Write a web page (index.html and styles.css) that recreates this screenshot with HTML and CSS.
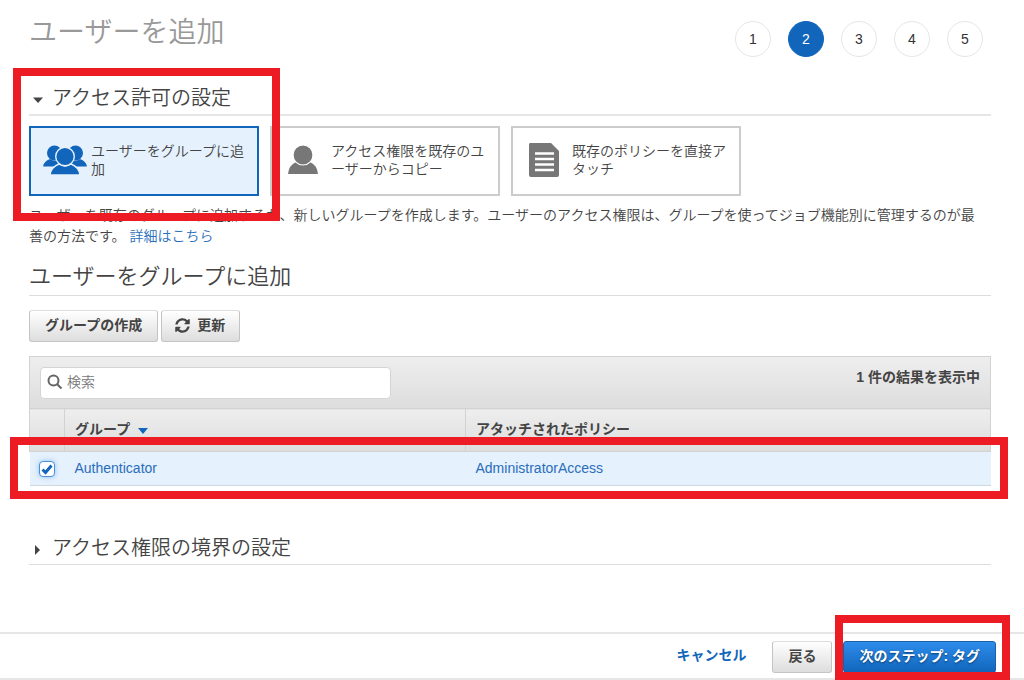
FILE: index.html
```html
<!DOCTYPE html>
<html lang="ja">
<head>
<meta charset="utf-8">
<title>ユーザーを追加</title>
<link rel="stylesheet" href="styles.css">
</head>
<body>
<main class="page">
  <header class="page-header">
    <h1 class="page-title">ユーザーを追加</h1>
    <ol class="steps">
      <li class="step">1</li>
      <li class="step step-current" aria-current="step">2</li>
      <li class="step">3</li>
      <li class="step">4</li>
      <li class="step">5</li>
    </ol>
  </header>

  <section class="permissions">
    <h2 class="section-title">
      <button class="toggle" type="button" aria-expanded="true"><svg class="caret" viewBox="0 0 10 10" aria-hidden="true"><path d="M0 2.500h10L5 8z"/></svg>アクセス許可の設定</button>
    </h2>
    <div class="options">
      <button class="option option-selected" type="button" aria-pressed="true">
        <svg class="icon-group" viewBox="0 0 44 30" aria-hidden="true">
          <g fill="#1166bb">
            <circle cx="11.500" cy="8" r="7.500"/><circle cx="32.500" cy="8" r="7.500"/>
            <path d="M0 21.500q1-5.500 7-7.500 4 3 8 1l4 6.500zM44 21.500q-1-5.500-7-7.500-4 3-8 1l-4 6.500z"/>
          </g>
          <g fill="#1166bb" stroke="#e5f1fd" stroke-width="1.400">
            <path d="M7 30q1-8 9-11 6 4 12 0 8 3 9 11z"/>
            <circle cx="22" cy="11.500" r="9.300"/>
          </g>
        </svg>
        <span class="option-label">ユーザーをグループに追加</span>
      </button>
      <button class="option" type="button" aria-pressed="false">
        <svg class="icon-user" viewBox="0 0 32 30" aria-hidden="true">
          <path d="M1 29q1-9 8-12 7 5 14 0 7 3 8 12z"/>
          <circle cx="16" cy="10" r="10" stroke="#fff" stroke-width="1.200"/>
        </svg>
        <span class="option-label">アクセス権限を既存のユーザーからコピー</span>
      </button>
      <button class="option" type="button" aria-pressed="false">
        <svg class="icon-doc" viewBox="0 0 32 36" aria-hidden="true">
          <path d="M2 1h21l8 8v24q0 2-2 2H3q-2 0-2-2V3q0-2 1-2z"/>
          <path d="M7 11.500h19M7 17h19M7 22.500h19M7 28h19" stroke="#fff" stroke-width="2.500"/>
        </svg>
        <span class="option-label">既存のポリシーを直接アタッチ</span>
      </button>
    </div>
    <p class="help">ユーザーを既存のグループに追加するか、新しいグループを作成します。ユーザーのアクセス権限は、グループを使ってジョブ機能別に管理するのが最善の方法です。 <a class="link" href="#">詳細はこちら</a></p>
    <div class="mark mark-options"></div>
  </section>

  <section class="groups">
    <h3 class="sub-title">ユーザーをグループに追加</h3>
    <div class="actions">
      <button class="btn" type="button">グループの作成</button>
      <button class="btn btn-refresh" type="button"><svg class="icon-refresh" viewBox="0 0 512 512" aria-hidden="true"><path d="M370.700 133.300C339.500 104 298.900 88 255.800 88c-77.500.1-144.300 53.200-162.800 126.900-1.300 5.400-6.100 9.100-11.700 9.100H24.100c-7.500 0-13.200-6.800-11.800-14.200C33.900 94.900 134.800 8 256 8c66.400 0 126.800 26.100 171.300 68.700L463 41c15.100-15.100 41-4.400 41 17v134c0 13.300-10.700 24-24 24H346c-21.400 0-32.100-25.900-17-41zM32 296h134c21.400 0 32.100 25.900 17 41l-41.800 41.800c31.300 29.300 71.800 45.300 114.900 45.300 77.400-.1 144.300-53.100 162.800-126.900 1.300-5.400 6.100-9.100 11.700-9.100h57.300c7.500 0 13.200 6.800 11.800 14.200C478.100 417.100 377.200 504 256 504c-66.400 0-126.800-26.100-171.300-68.700L49 471c-15.100 15.100-41 4.400-41-17V320c0-13.300 10.700-24 24-24z"/></svg>更新</button>
    </div>
    <div class="table-wrap">
      <div class="toolbar">
        <label class="search">
          <svg class="icon-search" viewBox="0 0 16 16" aria-hidden="true"><circle cx="6.500" cy="6.500" r="5"/><path d="M10.200 10.200l4.300 4.300"/></svg>
          <input class="search-input" type="text" placeholder="検索" aria-label="検索">
        </label>
        <span class="count">1 件の結果を表示中</span>
      </div>
      <table class="table">
        <thead>
          <tr><th class="col-check"></th><th class="col-group">グループ<svg class="sort" viewBox="0 0 10 6" aria-hidden="true"><path d="M0 0h10L5 6z"/></svg></th><th>アタッチされたポリシー</th></tr>
        </thead>
        <tbody>
          <tr>
            <td class="cell-check"><input class="check" type="checkbox" checked aria-label="Authenticator"></td>
            <td><a class="link" href="#">Authenticator</a></td>
            <td><a class="link" href="#">AdministratorAccess</a></td>
          </tr>
        </tbody>
      </table>
      <div class="mark mark-row"></div>
    </div>
  </section>

  <section class="boundary">
    <h2 class="section-title section-title-thin">
      <button class="toggle" type="button" aria-expanded="false"><svg class="caret" viewBox="0 0 10 10" aria-hidden="true"><path d="M2 0v10l5-5z"/></svg>アクセス権限の境界の設定</button>
    </h2>
  </section>
</main>

<footer class="footer">
  <a class="cancel" href="#">キャンセル</a>
  <button class="btn btn-back" type="button">戻る</button>
  <div class="next">
    <button class="btn btn-primary" type="button">次のステップ: タグ</button>
    <div class="mark mark-next"></div>
  </div>
</footer>
</body>
</html>
```

FILE: styles.css
```css
* { box-sizing: border-box; }

body {
  margin: 0;
  background: #fff;
  color: #444;
  font: 14px/21px "Liberation Sans", "Noto Sans CJK JP", sans-serif;
}

button, input { font: inherit; color: inherit; }
h1, h2, h3, p, ol { margin: 0; padding: 0; }
svg { flex: none; }

.page { padding: 0 33px 0 29px; }
.link { color: #2a6ebb; text-decoration: none; }

.page-header {
  display: flex;
  justify-content: space-between;
  align-items: flex-start;
  padding-top: 11px;
  height: 80px;
}
.page-title { padding-top: 2px; font-size: 28px; line-height: 40px; font-weight: 350; color: #999; }
.steps { display: flex; gap: 17px; list-style: none; padding: 10px 8px 0 0; }
.step {
  width: 36px;
  height: 36px;
  border: 1px solid #e6e6e6;
  border-radius: 50%;
  line-height: 34px;
  text-align: center;
  color: #333;
}
.step-current { background: #1166bb; border-color: #1166bb; color: #fff; }

.permissions { position: relative; }
.section-title {
  border-bottom: 2px solid #e6e6e6;
  height: 36px;
  padding-top: 1px;
  font-size: 20px;
  font-weight: 350;
}
.section-title-thin { border-bottom: 1px solid #ddd; height: 35px; }
.toggle {
  display: flex;
  align-items: center;
  gap: 9px;
  padding: 0 0 0 4px;
  border: 0;
  background: none;
  line-height: 34px;
}
.caret { width: 10px; height: 10px; margin-top: 4px; fill: #444; }

.options { display: flex; gap: 11px; padding-top: 10px; }
.option {
  display: flex;
  align-items: center;
  width: 230px;
  height: 70px;
  padding: 0 10px 2px 11px;
  border: 2px solid #ccc;
  background: #fff;
  text-align: left;
  font-weight: 350;
  line-height: 18px;
}
.option-selected { border-color: #1166bb; background: #e5f1fd; }
.option-label { flex: 1; }
.icon-group { width: 44px; height: 30px; margin: 0 4px 0 1px; }
.icon-user { width: 32px; height: 30px; margin: 0 12px 0 4px; fill: #777; }
.icon-doc { width: 32px; height: 36px; margin: 0 12px 0 4px; fill: #777; }
.help { padding: 9px 6px 0 0; font-weight: 350; }

.groups { padding-top: 10px; }
.sub-title {
  height: 39px;
  border-bottom: 1px solid #ddd;
  font-size: 22px;
  line-height: 40px;
  font-weight: 350;
}
.actions { display: flex; gap: 3px; padding: 14px 0; }
.btn {
  display: flex;
  align-items: center;
  justify-content: center;
  height: 32px;
  padding: 0 15px 2px;
  border: 1px solid #c4c4c4;
  border-top-color: #ddd;
  border-radius: 3px;
  background: linear-gradient(#fff, #ddd);
  font-weight: 700;
  white-space: nowrap;
}
.btn-refresh { gap: 7px; padding: 0 14px 2px 13px; }
.icon-refresh { width: 15px; height: 15px; fill: #444; }

.table-wrap { position: relative; }
.toolbar {
  display: flex;
  justify-content: space-between;
  height: 52px;
  padding: 10px 10px 0 10px;
  border: 1px solid #d2d2d2;
  border-bottom: 0;
  background: linear-gradient(#eee, #ddd);
}
.search {
  display: flex;
  align-items: center;
  gap: 4px;
  width: 351px;
  height: 32px;
  padding: 0 6px 2px;
  border: 1px solid #d4d4d4;
  border-radius: 4px;
  background: #fff;
}
.icon-search { width: 16px; height: 16px; fill: none; stroke: #666; stroke-width: 2; }
.search-input { flex: 1; min-width: 0; padding: 0; border: 0; outline: 0; background: none; font-weight: 350; }
.search-input::placeholder { color: #777; }
.count { font-weight: 700; }

.table { width: 100%; border-collapse: collapse; table-layout: fixed; text-align: left; }
.table th {
  height: 43px;
  padding: 0 10px 2px;
  border: 1px solid #d2d2d2;
  background: linear-gradient(#eee, #ddd);
}
.table td { height: 34px; padding: 0 10px; background: #e5f1fd; border-bottom: 1px solid #ccd8e2; }
.col-check { width: 35px; }
.col-group { width: 401px; }
.sort { width: 10px; height: 6px; margin-left: 8px; fill: #1166bb; }
.table .cell-check { padding: 0 9px; }
.check {
  display: block;
  appearance: none;
  width: 16px;
  height: 16px;
  margin: 0;
  border: 1px solid #4a90d9;
  border-radius: 4px;
  background: #fff url("data:image/svg+xml,%3Csvg xmlns='http://www.w3.org/2000/svg' viewBox='0 0 14 14'%3E%3Cpath d='M2.500 7.500l3 3 6-7' fill='none' stroke='%231166bb' stroke-width='3'/%3E%3C/svg%3E");
  box-shadow: 0 0 5px #8cc0f5;
}

.boundary { padding-top: 44px; }

.footer {
  display: flex;
  justify-content: flex-end;
  align-items: flex-start;
  height: 48px;
  margin-top: 67px;
  padding: 7px 28px 0 0;
  border-top: 2px solid #e6e6e6;
  border-bottom: 2px solid #e6e6e6;
}
.cancel { margin-right: 26px; line-height: 29px; font-weight: 700; color: #1166bb; text-decoration: none; }
.btn-back { margin-right: 11px; }
.next { position: relative; }
.btn-primary {
  border-color: #1a5fa8;
  background: linear-gradient(#2e8cec, #1166bb);
  color: #fff;
  text-shadow: 0 1px 2px #063a70;
}

/* Highlight frames laid over the controls they point out */
.mark { position: absolute; border: 8px solid #ed1c24; pointer-events: none; }
.mark-options { top: -12px; left: -16px; width: 267px; height: 153px; }
.mark-row { left: -19px; right: -17px; bottom: -13px; height: 62px; }
.mark-next { top: -26px; left: -8px; right: -14px; height: 65px; }
```
